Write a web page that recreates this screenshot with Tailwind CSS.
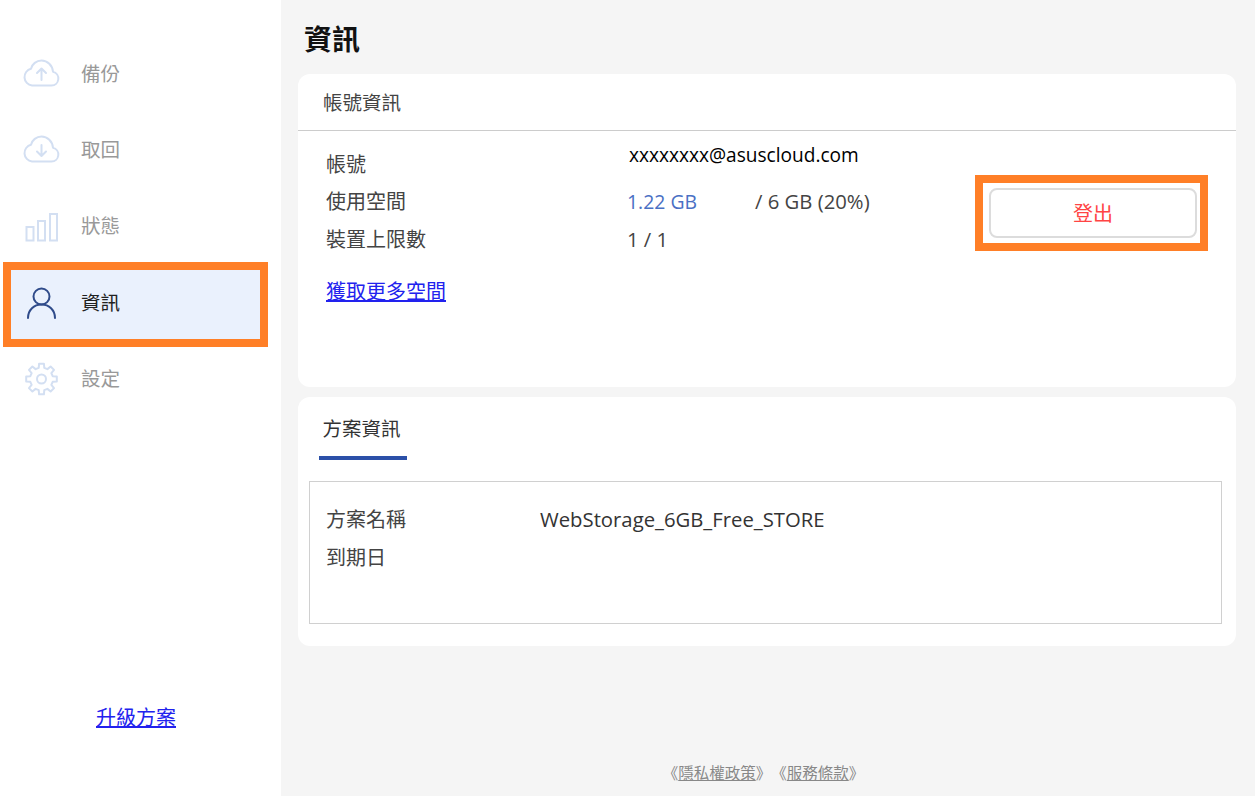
<!DOCTYPE html>
<html lang="zh-Hant">
<head>
  <meta charset="UTF-8">
  <title>資訊</title>
  <script src="https://cdn.jsdelivr.net/npm/@tailwindcss/browser@4"></script>
</head>
<body class="bg-[#f5f5f5] font-['Open_Sans','Noto_Sans_CJK_TC',sans-serif] text-[#333]">
  <div class="flex h-[796px] w-[1255px] overflow-hidden">
    <!-- Sidebar -->
    <aside class="w-[281px] shrink-0 bg-white flex flex-col pt-[36px]">
      <nav class="flex flex-col">
        <a class="h-[76.25px] flex items-center pl-[23px] gap-[21px] text-[19.5px] text-[#999]">
          <svg class="w-[37px] h-[32px]" viewBox="0 0 37 32" fill="none" stroke="#d3dff2" stroke-width="2" stroke-linecap="round" stroke-linejoin="round">
            <path d="M9 27.500h19.500a7 7 0 0 0 1.500-13.800C29.500 7.500 24.500 2.500 18.500 2.500c-5 0-9.500 3.500-10.500 8.300A8.500 8.500 0 0 0 9 27.500z"/>
            <path d="M18.500 22V11M14 15l4.500-4.500L23 15"/>
          </svg>
          <span class="mb-[2px]">備份</span>
        </a>
        <a class="h-[76.25px] flex items-center pl-[23px] gap-[21px] text-[19.5px] text-[#999]">
          <svg class="w-[37px] h-[32px]" viewBox="0 0 37 32" fill="none" stroke="#d3dff2" stroke-width="2" stroke-linecap="round" stroke-linejoin="round">
            <path d="M9 27.500h19.500a7 7 0 0 0 1.500-13.800C29.500 7.500 24.500 2.500 18.500 2.500c-5 0-9.500 3.500-10.500 8.300A8.500 8.500 0 0 0 9 27.500z"/>
            <path d="M18.500 11v11M14 17.500l4.500 4.500 4.500-4.500"/>
          </svg>
          <span class="mb-[2px]">取回</span>
        </a>
        <a class="h-[76.25px] flex items-center pl-[23px] gap-[21px] text-[19.5px] text-[#999]">
          <svg class="w-[37px] h-[32px]" viewBox="0 0 37 32" fill="none" stroke="#d3dff2" stroke-width="2">
            <rect x="3.500" y="16" width="7" height="13.500"/>
            <rect x="15" y="10" width="7" height="19.500"/>
            <rect x="27" y="3" width="7" height="26.500"/>
          </svg>
          <span class="mb-[2px]">狀態</span>
        </a>
        <a class="relative ml-[3px] w-[265px] h-[76.25px] flex items-center pl-[20px] gap-[21px] text-[19.5px] text-[#222] bg-[#eaf1fd]">
          <svg class="w-[37px] h-[32px]" viewBox="0 0 37 32" fill="none" stroke="#2f4b8a" stroke-width="2" stroke-linecap="round">
            <circle cx="18.500" cy="9.500" r="8"/>
            <path d="M5 31c0-8 6-13.500 13.500-13.500S32 23 32 31"/>
          </svg>
          <span>資訊</span>
          <div class="absolute left-0 top-[-3px] w-[265px] h-[85px] border-[8px] border-[#ff7f27]"></div>
        </a>
        <a class="h-[76.25px] flex items-center pl-[23px] gap-[21px] text-[19.5px] text-[#999]">
          <svg class="w-[37px] h-[34px]" viewBox="0 0 37 34" fill="none" stroke="#d3dff2" stroke-width="2" stroke-linejoin="round">
            <path d="M15.720 5.840 16.080 1.690H20.920L21.280 5.840 24.420 7.140 27.610 4.460 31.040 7.890 28.360 11.080 29.660 14.220 33.810 14.580V19.420L29.660 19.780 28.360 22.920 31.040 26.110 27.610 29.540 24.420 26.860 21.280 28.160 20.920 32.310H16.080L15.720 28.160 12.580 26.860 9.390 29.540 5.960 26.110 8.640 22.920 7.340 19.780 3.190 19.420V14.580L7.340 14.220 8.640 11.080 5.960 7.890 9.390 4.460 12.580 7.140z"/>
            <circle cx="18.500" cy="17" r="4.500"/>
          </svg>
          <span class="mb-[2px]">設定</span>
        </a>
      </nav>
      <a href="#" class="mt-[288px] mr-[9px] text-center text-[20px] leading-[26px] text-[#2222ee] underline">升級方案</a>
    </aside>

    <!-- Main -->
    <main class="flex-1 pl-[17px] pr-[19px] relative">
      <h1 class="h-[74px] pl-[6px] pt-[15px] text-[28px] leading-[48px] font-bold text-[#111]">資訊</h1>

      <section class="h-[313px] bg-white rounded-[12px]">
        <div class="h-[57px] border-b border-[#cccccc] pl-[25px] pt-[2px] flex items-center text-[19.5px] text-[#444]">帳號資訊</div>
        <div class="flex justify-between pl-[28px] pr-[28px] pt-[15px]">
          <div class="text-[20px] leading-[37px]">
            <div class="flex">
              <span class="w-[301px] text-[#444]">帳號</span>
              <span class="ml-[2px] -translate-y-[9px] text-[#000] font-medium text-[19.100px]">xxxxxxxx@asuscloud.com</span>
            </div>
            <div class="flex">
              <span class="w-[301px] text-[#444]">使用空間</span>
              <span class="w-[128px] text-[#4a70c4] text-[19.400px]">1.22 GB</span>
              <span class="text-[#444] text-[20.300px]">/ 6 GB (20%)</span>
            </div>
            <div class="flex mt-[1px]">
              <span class="w-[301px] text-[#444]">裝置上限數</span>
              <span class="text-[#444] text-[20.300px]">1 / 1</span>
            </div>
            <a href="#" class="block mt-[15px] text-[#2222ee] underline">獲取更多空間</a>
          </div>
          <div class="relative w-[208px] h-[50px] mt-[42px] mr-[11px]">
            <button class="w-full h-full pt-[2px] border-2 border-[#dcdcdc] rounded-[8px] bg-white text-[#f44] text-[20px]">登出</button>
            <div class="absolute left-[-14px] top-[-13px] w-[233px] h-[76px] border-[8px] border-[#ff7f27]"></div>
          </div>
        </div>
      </section>

      <section class="h-[249px] mt-[10px] bg-white rounded-[12px] pl-[11px] pr-[14px]">
        <div class="ml-[10px] w-[88px] h-[63px] border-b-4 border-[#2b50a8] pt-[4px] pr-[3px] flex items-center justify-center text-[19.5px] text-[#333]">方案資訊</div>
        <div class="mt-[21px] h-[143px] border border-[#d0d0d0] pl-[16px] pt-[19px] text-[20px] leading-[37.5px]">
          <div class="flex">
            <span class="w-[214px] text-[#444]">方案名稱</span>
            <span class="text-[20.300px] text-[#333]">WebStorage_6GB_Free_STORE</span>
          </div>
          <div class="text-[#444]">到期日</div>
        </div>
      </section>

      <footer class="absolute left-0 right-[9px] bottom-[11px] text-center text-[15.500px] leading-[24px] text-[#888] [text-spacing-trim:space-all]">
        《<a href="#" class="underline">隱私權政策</a>》《<a href="#" class="underline">服務條款</a>》
      </footer>
    </main>
  </div>
</body>
</html>
